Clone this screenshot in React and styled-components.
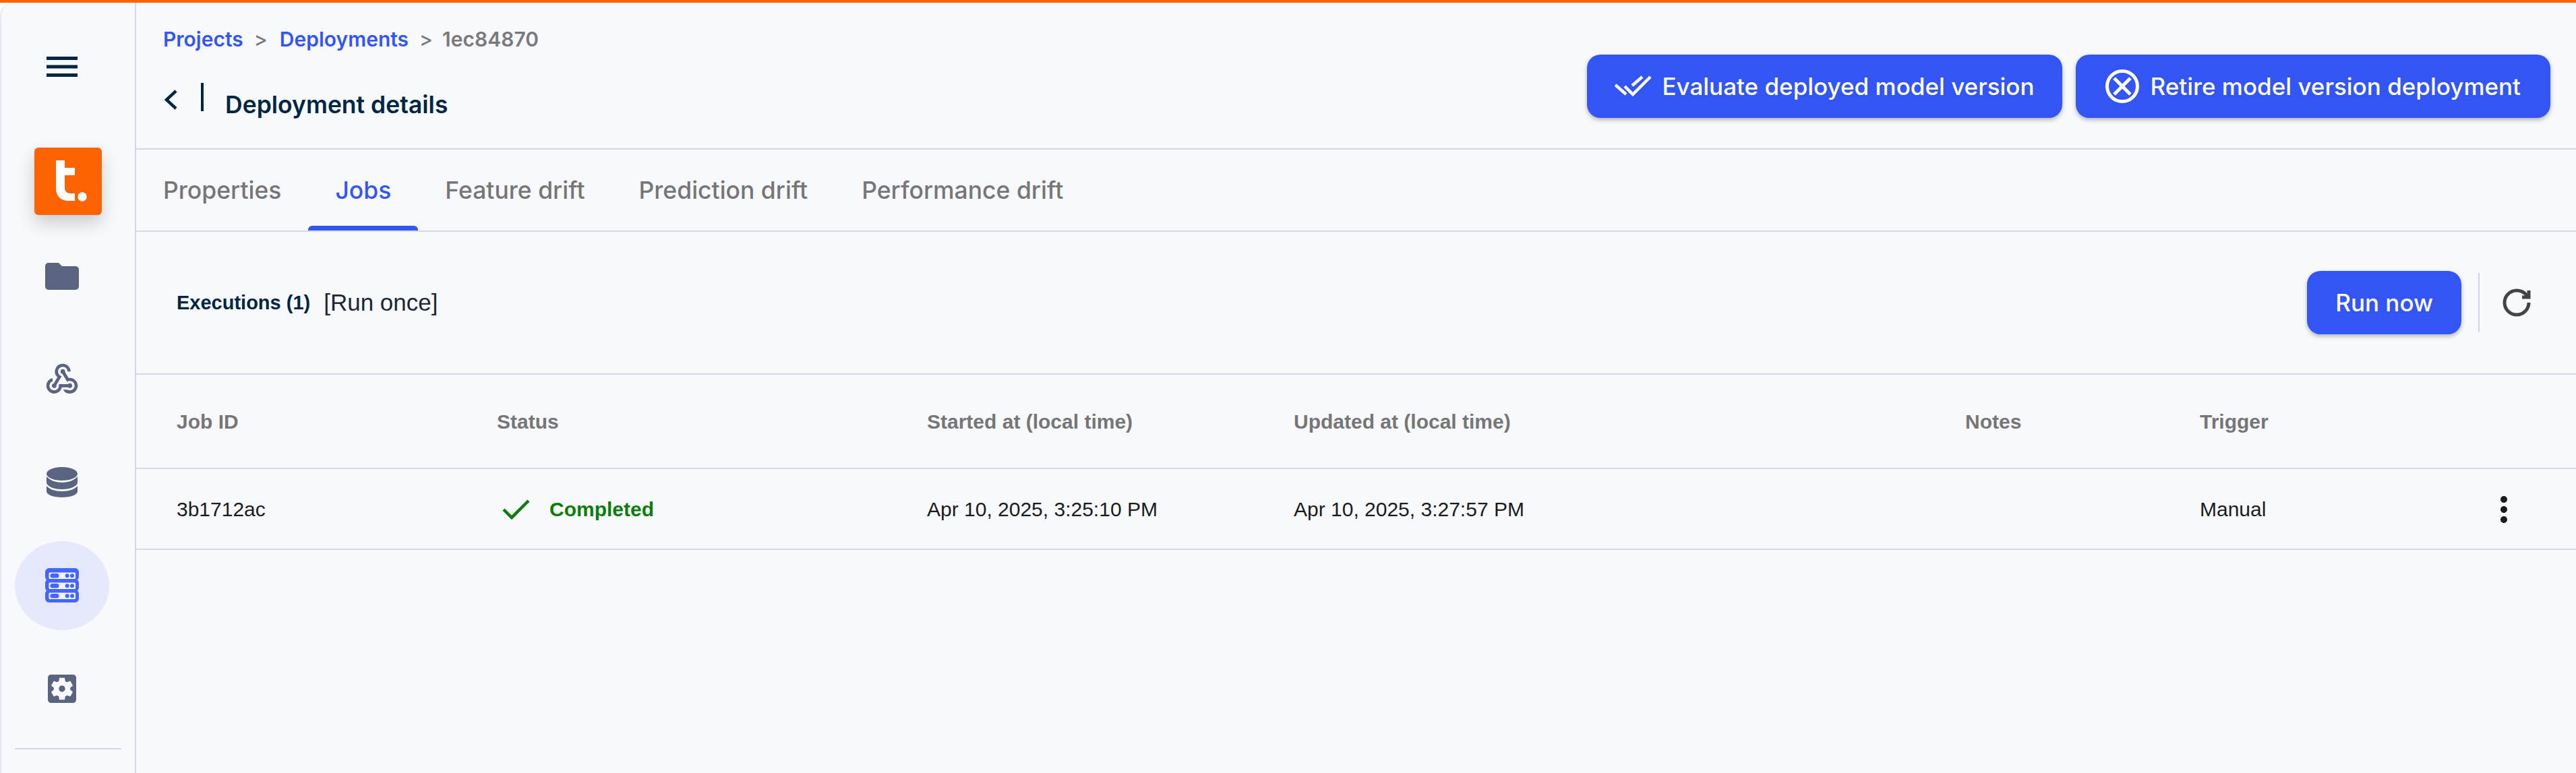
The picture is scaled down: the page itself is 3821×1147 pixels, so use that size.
import React from 'react'
import styled, { createGlobalStyle } from 'styled-components'
import { MdFolder, MdWebhook, MdSettingsApplications, MdMoreVert } from 'react-icons/md'
import { RotateCw } from 'lucide-react'

const GlobalStyle = createGlobalStyle`
  html, body { margin: 0; padding: 0; background: #fff; }
  body { font-family: "Liberation Sans", Arial, sans-serif; }
  * { box-sizing: border-box; }
`

const Shell = styled.div`
  width: 3821px;
  height: 1147px;
  display: flex;
  flex-direction: column;
  overflow: hidden;
`
const TopBar = styled.div`
  height: 4px;
  background: #ff6200;
`
const Body = styled.div`
  flex: 1;
  display: flex;
  background: #f8f9fc;
  border-top-left-radius: 20px;
  border-left: 2px solid #e6e8ef;
  min-height: 0;
`

// Sidebar
const Sidebar = styled.aside`
  width: 200px;
  flex: none;
  border-right: 2px solid #d0d7ea;
  padding: 0 20px;
  display: flex;
  flex-direction: column;
`
const MenuButton = styled.div`
  height: 190px;
  width: 140px;
  display: flex;
  justify-content: center;
  padding-top: 80px;
  color: #002642;
`
const Logo = styled.div`
  width: 100px;
  height: 100px;
  margin: 25px 0 0 29px;
  background: #ff6200;
  border-radius: 6px;
  box-shadow: 0 12px 26px rgba(0, 0, 0, 0.18);
  display: flex;
  align-items: center;
  justify-content: center;
`
const NavList = styled.nav`
  margin-top: 15px;
  display: flex;
  flex-direction: column;
`
const NavItem = styled.div`
  width: 140px;
  height: ${(props) => props.$h || 153}px;
  display: flex;
  align-items: center;
  justify-content: center;
`
const NavCircle = styled.div`
  width: 140px;
  height: 132px;
  border-radius: 50%;
  display: flex;
  align-items: center;
  justify-content: center;
  color: ${(props) => (props.$active ? '#4466ff' : '#5a6480')};
  background: ${(props) => (props.$active ? '#e6e9fb' : 'transparent')};
`
const SideDivider = styled.div`
  margin-top: 12px;
  height: 2px;
  background: #d0d7ea;
`

// Main
const Main = styled.main`
  flex: 1;
  min-width: 0;
  display: flex;
  flex-direction: column;
`
const Header = styled.header`
  height: 218px;
  padding: 32px 38px 0 40px;
  border-bottom: 2px solid #d0d7ea;
  display: flex;
  justify-content: space-between;
`
const Crumbs = styled.div`
  display: flex;
  align-items: center;
  font-family: Inter, sans-serif;
  font-size: 30px;
  font-weight: 600;
  line-height: 44px;
  color: #7a7a7a;
`
const CrumbLink = styled.span`
  color: #3355f5;
`
const CrumbSep = styled.span`
  margin: 0 ${(props) => props.$gap}px 0 16px;
  font-weight: 500;
`
const TitleRow = styled.div`
  margin-top: 43px;
  display: flex;
  align-items: flex-start;
  color: #002642;
`
const BackSlot = styled.div`
  width: 38px;
  height: 42px;
  padding-top: 10px;
  display: flex;
`
const TitleRule = styled.div`
  width: 4px;
  height: 42px;
  background: #002642;
  margin: 0 32px 0 18px;
`
const Title = styled.h1`
  margin: 11px 0 0;
  font-family: Inter, sans-serif;
  font-size: 35.5px;
  line-height: 44px;
  font-weight: 600;
`
const HeaderActions = styled.div`
  display: flex;
  gap: 20px;
  padding-top: 45px;
`
const Button = styled.button`
  height: 94px;
  padding: 0 ${(props) => props.$px || 44}px;
  border: none;
  border-radius: 20px;
  background: #3355f5;
  color: #fff;
  display: flex;
  align-items: center;
  gap: ${(props) => props.$gap || 12}px;
  font-family: Inter, sans-serif;
  font-size: 35px;
  font-weight: 500;
  box-shadow: 0 3px 6px rgba(0, 0, 0, 0.28);
  white-space: nowrap;
`

// Tabs
const TabBar = styled.div`
  height: 122px;
  padding-left: 40px;
  border-bottom: 2px solid #d8dae2;
  display: flex;
  gap: 80px;
`
const Tab = styled.div`
  height: 120px;
  position: relative;
  display: flex;
  align-items: center;
  font-family: Inter, sans-serif;
  font-size: 35.5px;
  font-weight: 500;
  color: ${(props) => (props.$active ? '#3355f5' : '#767676')};
  &::after {
    content: '';
    display: ${(props) => (props.$active ? 'block' : 'none')};
    position: absolute;
    left: -40px;
    right: -40px;
    bottom: 0;
    height: 7px;
    background: #3355f5;
    border-radius: 6px 6px 0 0;
  }
`

// Executions toolbar
const Toolbar = styled.div`
  height: 212px;
  padding: 0 64px 0 60px;
  border-bottom: 2px solid #d0d7ea;
  display: flex;
  align-items: center;
`
const ToolbarTitle = styled.div`
  font-size: 29px;
  font-weight: 700;
  color: #002642;
`
const ToolbarNote = styled.div`
  margin-left: 20px;
  font-size: 35px;
  color: #1d2633;
`
const ToolbarRight = styled.div`
  margin-left: auto;
  display: flex;
  align-items: center;
`
const VRule = styled.div`
  width: 2px;
  height: 88px;
  margin: 0 31px 0 25px;
  background: #cfd5e6;
`

// Table
const Row = styled.div`
  display: grid;
  grid-template-columns: 475px 638px 544px 996px 348px 1fr;
  align-items: center;
  height: ${(props) => props.$h}px;
  padding: 2px 60px 0;
  border-bottom: 2px solid #d8dae2;
`
const HeadCell = styled.div`
  font-size: 30px;
  font-weight: 700;
  color: #767676;
`
const Cell = styled.div`
  font-size: 30px;
  color: #1c1c1c;
  display: flex;
  align-items: center;
  justify-content: space-between;
`
const StatusText = styled.span`
  margin-left: 28px;
  font-weight: 700;
  color: #0b7d0b;
`
const Status = styled.div`
  display: flex;
  align-items: center;
  padding-left: 8px;
`
const KebabSlot = styled.span`
  display: flex;
  margin-right: 17px;
  color: #1c1c1c;
`

const ServerIcon = () => (
  <svg width="50" height="51" viewBox="0 0 50 51" fill="none">
    <rect x="0" y="0" width="50" height="19" rx="6" fill="currentColor" />
    <rect x="0" y="16" width="50" height="19" rx="6" fill="currentColor" />
    <rect x="0" y="32" width="50" height="19" rx="6" fill="currentColor" />
    {[6.5, 21.5, 36.5].map((y) => (
      <g key={y}>
        <rect x="5.5" y={y} width="39.5" height="9.5" rx="1.5" fill="#f0f2fd" />
        <rect x="7.5" y={y + 1.5} width="13" height="6.5" rx="3.2" fill="currentColor" />
        <circle cx="32.7" cy={y + 4.75} r="3" fill="currentColor" />
        <circle cx="40" cy={y + 4.75} r="3" fill="currentColor" />
      </g>
    ))}
  </svg>
)

const DatabaseIcon = () => (
  <svg width="46" height="46" viewBox="0 0 46 46" fill="currentColor">
    <ellipse cx="23" cy="10" rx="23" ry="10" />
    <path d="M0 14c4 5 13 9 23 9s19-4 23-9v9c0 5-10 10-23 10S0 28 0 23z" />
    <path d="M0 28c4 5 13 8 23 8s19-3 23-8v8c0 5-10 9-23 9S0 41 0 36z" />
  </svg>
)

const LogoMark = () => (
  <svg width="100" height="100" viewBox="0 0 100 100" fill="#fff">
    <path d="M32 19h13v11h15v11H45v18c0 6 3 9 9 9h6v11h-9C39 79 32 72 32 60z" />
    <circle cx="71" cy="73" r="6.7" />
  </svg>
)

const DoneAllIcon = () => (
  <svg width="56" height="32" viewBox="0 0 56 32" fill="none" stroke="#fff" strokeWidth="4.5">
    <path d="M1 14l16 14" />
    <path d="M15 16l12 12L53 2" />
    <path d="M26 15L41 2" />
  </svg>
)

const RetireIcon = () => (
  <svg width="50" height="50" viewBox="0 0 50 50" fill="none" stroke="#fff" strokeWidth="5">
    <circle cx="25" cy="25" r="22.5" />
    <path d="M13 13l24 24M37 13L13 37" />
  </svg>
)

const jobCols = ['Job ID', 'Status', 'Started at (local time)', 'Updated at (local time)', 'Notes', 'Trigger']

export default function App() {
  return (
    <Shell>
      <GlobalStyle />
      <TopBar />
      <Body>
        <Sidebar>
          <MenuButton>
            <svg width="46" height="30" viewBox="0 0 46 30" fill="currentColor">
              <rect width="46" height="5" />
              <rect y="12.5" width="46" height="5" />
              <rect y="25" width="46" height="5" />
            </svg>
          </MenuButton>
          <Logo><LogoMark /></Logo>
          <NavList>
            <NavItem $h={152}><NavCircle><MdFolder size={60} /></NavCircle></NavItem>
            <NavItem><NavCircle><MdWebhook size={56} /></NavCircle></NavItem>
            <NavItem><NavCircle><DatabaseIcon /></NavCircle></NavItem>
            <NavItem><NavCircle $active><ServerIcon /></NavCircle></NavItem>
            <NavItem><NavCircle><MdSettingsApplications size={56} /></NavCircle></NavItem>
          </NavList>
          <SideDivider />
        </Sidebar>
        <Main>
          <Header>
            <div>
              <Crumbs>
                <CrumbLink>Projects</CrumbLink>
                <CrumbSep $gap={18}>&gt;</CrumbSep>
                <CrumbLink>Deployments</CrumbLink>
                <CrumbSep $gap={14}>&gt;</CrumbSep>
                1ec84870
              </Crumbs>
              <TitleRow>
                <BackSlot>
                  <svg width="22" height="30" viewBox="0 0 22 30" fill="none" stroke="currentColor" strokeWidth="4.5">
                    <path d="M19 2L5 15l14 13" />
                  </svg>
                </BackSlot>
                <TitleRule />
                <Title>Deployment details</Title>
              </TitleRow>
            </div>
            <HeaderActions>
              <Button $px={41} $gap={14}><DoneAllIcon />Evaluate deployed model version</Button>
              <Button $px={44} $gap={17}><RetireIcon />Retire model version deployment</Button>
            </HeaderActions>
          </Header>
          <TabBar>
            <Tab>Properties</Tab>
            <Tab $active>Jobs</Tab>
            <Tab>Feature drift</Tab>
            <Tab>Prediction drift</Tab>
            <Tab>Performance drift</Tab>
          </TabBar>
          <Toolbar>
            <ToolbarTitle>Executions (1)</ToolbarTitle>
            <ToolbarNote>[Run once]</ToolbarNote>
            <ToolbarRight>
              <Button $px={42}>Run now</Button>
              <VRule />
              <RotateCw size={48} color="#444" strokeWidth={2.5} strokeLinecap="butt" strokeLinejoin="miter" />
            </ToolbarRight>
          </Toolbar>
          <Row $h={140}>
            {jobCols.map((c) => <HeadCell key={c}>{c}</HeadCell>)}
          </Row>
          <Row $h={120}>
            <Cell>3b1712ac</Cell>
            <Cell>
              <Status>
                <svg width="42" height="30" viewBox="0 0 42 30" fill="none" stroke="#0b7d0b" strokeWidth="4.5">
                  <path d="M2 15l12 12L39 2" />
                </svg>
                <StatusText>Completed</StatusText>
              </Status>
            </Cell>
            <Cell>Apr 10, 2025, 3:25:10 PM</Cell>
            <Cell>Apr 10, 2025, 3:27:57 PM</Cell>
            <Cell />
            <Cell>
              Manual
              <KebabSlot><MdMoreVert size={60} /></KebabSlot>
            </Cell>
          </Row>
        </Main>
      </Body>
    </Shell>
  )
}
